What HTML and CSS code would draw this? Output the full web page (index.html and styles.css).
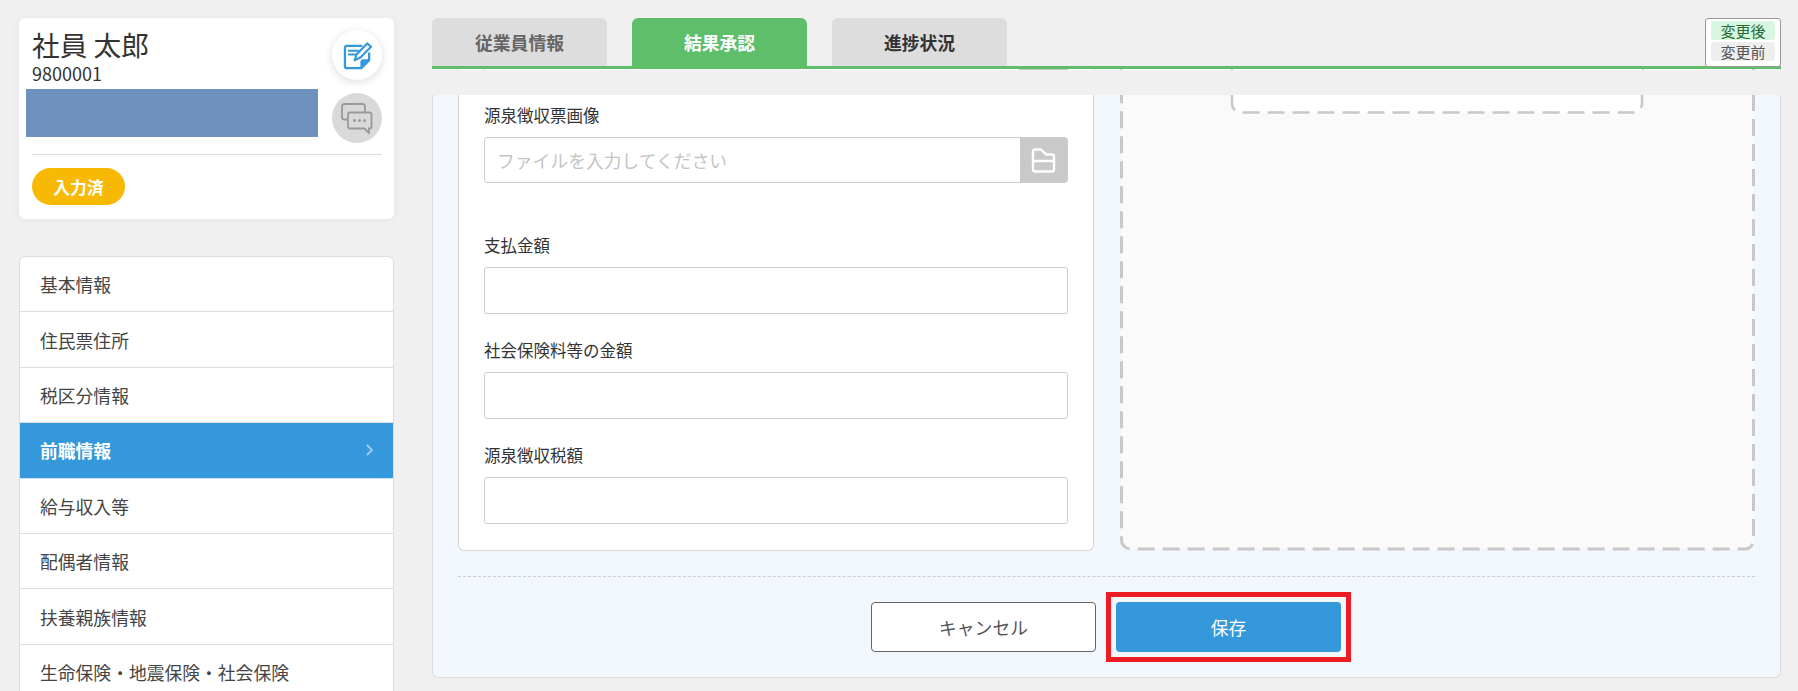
FILE: index.html
```html
<!DOCTYPE html>
<html lang="ja">
<head>
<meta charset="utf-8">
<title>前職情報</title>
<link rel="stylesheet" href="styles.css">
</head>
<body>
<div class="app">
  <aside class="sidebar">
    <section class="profile">
      <div class="profile-top">
        <div class="profile-info">
          <div class="name">社員 太郎</div>
          <div class="code">9800001</div>
          <div class="mask"></div>
        </div>
        <div class="actions">
          <button class="circle circle-white" type="button">
            <svg width="29" height="29" viewBox="0 0 30 30" fill="none">
              <path d="M20 5H4a2 2 0 0 0-2 2v19a2 2 0 0 0 2 2h15l8-8v-8" stroke="#3498db" stroke-width="2.400"/>
              <path d="M5 10h12M5 14h9" stroke="#3498db" stroke-width="2"/>
              <path d="M12 20l2-6L25 2.500l4 3.500L18 17z" fill="#fff" stroke="#3498db" stroke-width="2.200" stroke-linejoin="round"/>
              <path d="M18 28v-6a3 3 0 0 1 3-3h6.500z" fill="#3498db"/>
            </svg>
          </button>
          <button class="circle circle-gray" type="button">
            <svg width="32" height="31" viewBox="0 0 32 31" fill="none" stroke="#999" stroke-width="1.800">
              <path d="M6 16.500H3.500A2.500 2.500 0 0 1 1 14V3.500A2.500 2.500 0 0 1 3.500 1h18A2.500 2.500 0 0 1 24 3.500V9"/>
              <path d="M9 9.500h19.500a2 2 0 0 1 2 2v12a2 2 0 0 1-2 2H28v4.500l-4.500-4.500H9a2 2 0 0 1-2-2v-12a2 2 0 0 1 2-2z"/>
              <g fill="#999" stroke="none"><circle cx="13.500" cy="17.500" r="1.500"/><circle cx="18.500" cy="17.500" r="1.500"/><circle cx="23.500" cy="17.500" r="1.500"/></g>
            </svg>
          </button>
        </div>
      </div>
      <div class="profile-foot"><span class="badge">入力済</span></div>
    </section>
    <nav class="menu">
      <a class="menu-item">基本情報</a>
      <a class="menu-item">住民票住所</a>
      <a class="menu-item">税区分情報</a>
      <a class="menu-item is-active">前職情報
        <svg class="chev" width="7" height="12" viewBox="0 0 7 12" fill="none"><path d="M1 1l5 5-5 5" stroke="#a9cdee" stroke-width="1.800"/></svg>
      </a>
      <a class="menu-item">給与収入等</a>
      <a class="menu-item">配偶者情報</a>
      <a class="menu-item">扶養親族情報</a>
      <a class="menu-item">生命保険・地震保険・社会保険</a>
    </nav>
  </aside>
  <main class="main">
    <div class="tabs">
      <a class="tab tab-muted">従業員情報</a>
      <a class="tab tab-active">結果承認</a>
      <a class="tab">進捗状況</a>
    </div>
    <div class="legend">
      <span class="legend-after">変更後</span>
      <span class="legend-before">変更前</span>
    </div>
    <div class="peek"></div>
    <section class="panel">
      <div class="columns">
        <form class="form-card">
          <div class="field field-file">
            <label class="label">源泉徴収票画像</label>
            <div class="file-input">
              <span class="placeholder">ファイルを入力してください</span>
              <span class="folder">
                <svg width="25" height="25" viewBox="0 0 25 25" fill="none" stroke="#fff" stroke-width="2.400" stroke-linejoin="round">
                  <path d="M2 3.500a2 2 0 0 1 2-2h6l5 5h6a2 2 0 0 1 2 2v13a2 2 0 0 1-2 2H4a2 2 0 0 1-2-2z"/>
                  <path d="M2 13h21"/>
                </svg>
              </span>
            </div>
          </div>
          <div class="field"><label class="label">支払金額</label><div class="text-input"></div></div>
          <div class="field"><label class="label">社会保険料等の金額</label><div class="text-input"></div></div>
          <div class="field"><label class="label">源泉徴収税額</label><div class="text-input"></div></div>
        </form>
        <div class="drop-zone">
          <svg class="dashes" width="635" height="456" viewBox="0 0 635 456" fill="none">
            <rect x="1.500" y="-32" width="632" height="486" rx="9" fill="#fafafa" stroke="#c8c8c8" stroke-width="3" stroke-dasharray="17 8"/>
            <rect x="112" y="-32" width="410" height="49.500" rx="9" fill="#fff" stroke="#c8c8c8" stroke-width="2.500" stroke-dasharray="17 8"/>
          </svg>
        </div>
      </div>
      <div class="footer">
        <button class="btn btn-cancel" type="button">キャンセル</button>
        <span class="highlight"><button class="btn btn-save" type="button">保存</button></span>
      </div>
    </section>
  </main>
</div>
</body>
</html>
```

FILE: styles.css
```css
* { box-sizing: border-box; }
html, body { margin: 0; height: 691px; overflow: hidden; }
body {
  background: #f0f0f0;
  color: #333;
  font-family: "Noto Sans CJK JP", "Noto Sans", sans-serif;
}
button { font-family: inherit; }
.app { display: flex; height: 691px; padding-top: 18px; }

.sidebar { width: 375px; margin-left: 19px; flex: none; display: flex; flex-direction: column; gap: 37px; }
.profile {
  height: 201px;
  background: #fff;
  border-radius: 6px;
  padding: 12px 12px 0 13px;
  box-shadow: 0 1px 8px rgba(0,0,0,.05);
}
.profile-top { display: flex; justify-content: space-between; height: 125px; border-bottom: 1px solid #ddd; }
.profile-info { width: 292px; margin-left: -6px; }
.name { font-size: 27.7px; line-height: 30px; padding-left: 6px; margin-top: -1px; }
.code { font-size: 18px; line-height: 20px; padding-left: 6px; margin-top: 4px; }
.mask { height: 48px; width: 292px; background: #6f91bd; margin-top: 6px; }
.actions { display: flex; flex-direction: column; gap: 13px; }
.circle { width: 50px; height: 50px; border: 0; border-radius: 50%; display: flex; align-items: center; justify-content: center; padding: 0; }
.circle-white { background: #fff; box-shadow: 0 2px 10px rgba(0,0,0,.14); }
.circle-gray { background: #d9d9d9; }
.profile-foot { padding-top: 13px; }
.badge {
  display: inline-flex; align-items: center; justify-content: center;
  width: 93px; height: 37px; border-radius: 19px;
  background: #f8b905; color: #fff; font-weight: 700; font-size: 16.8px;
}

.menu {
  flex: 1;
  background: #fff;
  border: 1px solid #ddd;
  border-bottom: 0;
  border-radius: 6px 6px 0 0;
  overflow: hidden;
}
.menu-item {
  display: flex; align-items: center; justify-content: space-between;
  height: 55.4px;
  padding: 0 20px 0 20px;
  font-size: 17.8px;
  color: #444;
  border-bottom: 1px solid #ddd;
}
.is-active { background: #3498db; color: #fff; font-weight: 700; border-bottom-color: #cfe3f4; }

.main { position: relative; width: 1349px; margin-left: 38px; flex: none; }
.tabs { display: flex; gap: 25px; height: 51px; border-bottom: 3px solid #5fbe6a; }
.tab {
  width: 175px; height: 48px;
  display: flex; align-items: center; justify-content: center;
  background: #ddd; border-radius: 6px 6px 0 0;
  font-weight: 700; font-size: 17.8px; color: #333;
}
.tab-muted { color: #666; }
.tab-active { background: #5fbe6a; color: #fff; }
.legend {
  position: absolute; top: 0; right: 0;
  width: 76px; height: 49px;
  background: #fff; border: 1px solid #999; border-radius: 3px;
  padding: 2px 5px;
  display: flex; flex-direction: column; gap: 2px;
  font-size: 15px; line-height: 19px; text-align: center;
}
.legend-after { background: #d9f7e0; color: #1d6b35; border-radius: 3px; }
.legend-before { background: #eee; color: #555; border-radius: 3px; }
.peek { height: 26px; }
.peek::before {
  content: ""; display: block; height: 1px;
  background: linear-gradient(to right,
    #ddd 0 1px, #f2f6fd 1px 26px, #d5d5d5 26px 27px, #fff 27px 52px, #ccc 52px 53px,
    #fff 53px 587px, #c9c9c9 587px 636px, #fff 636px 661px, #d5d5d5 661px 662px,
    #f2f6fd 662px 688px, #c8c8c8 688px 690px, #fafafa 690px 799px, #c8c8c8 799px 801px,
    #fff 801px 1210px, #c8c8c8 1210px 1212px, #fafafa 1212px 1320px, #c8c8c8 1320px 1323px,
    #f2f6fd 1323px 1348px, #ddd 1348px 1349px);
}

.panel {
  height: 583px;
  background: #f2f6fd;
  border: 1px solid #ddd;
  border-top: 0;
  border-radius: 0 0 6px 6px;
  padding: 0 25px;
}
.columns { display: flex; justify-content: space-between; height: 456px; }
.form-card {
  width: 636px; background: #fff;
  border: 1px solid #d5d5d5; border-top: 0;
  border-radius: 0 0 6px 6px;
  padding: 0 25px;
}
.field { padding-top: 38px; height: 105px; }
.field-file { height: 103px; padding-top: 10px; }
.label { display: block; font-size: 16.5px; line-height: 22px; color: #333; margin-top: -2px; }
.field-file .label { margin-top: -1px; margin-bottom: 11px; }
.field:not(.field-file) .label { margin-bottom: 11px; }
.text-input { height: 47px; background: #fff; border: 1px solid #ccc; border-radius: 3px; }
.file-input { height: 46px; display: flex; border: 1px solid #ccc; border-radius: 3px; overflow: hidden; }
.placeholder { flex: 1; padding-left: 12px; line-height: 44px; color: #c4c4c4; font-size: 17.8px; }
.folder { width: 47px; background: #c9c9c9; display: flex; align-items: center; justify-content: center; }
.drop-zone { width: 635px; position: relative; }
.dashes { position: absolute; inset: 0; }
.footer {
  margin-top: 25px;
  height: 86px;
  border-top: 1px dashed #ccc;
  display: flex; justify-content: center; align-items: flex-start;
  padding: 25px 1px 0 0;
  gap: 20px;
}
.btn { width: 225px; height: 50px; border-radius: 4px; font-size: 17.8px; padding: 0; }
.btn-cancel { background: #fff; border: 1px solid #666; color: #555; }
.btn-save { background: #3498db; border: 0; color: #fff; display: block; }
.highlight { display: block; position: relative; }
.highlight::after { content: ""; position: absolute; inset: -10px; border: 5px solid #ed1c24; pointer-events: none; }
```
